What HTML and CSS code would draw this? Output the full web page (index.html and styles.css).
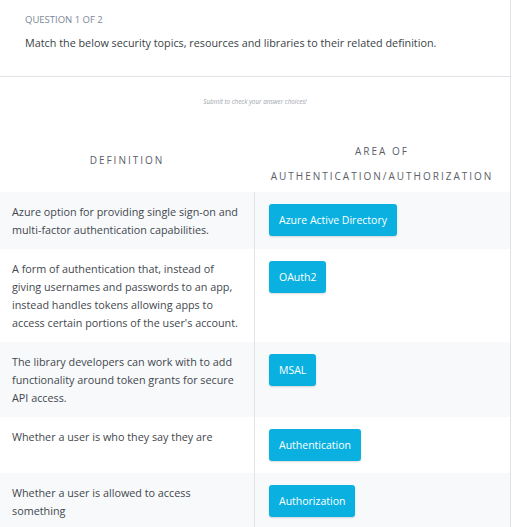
FILE: index.html
```html
<!DOCTYPE html>
<html>
<head>
<meta charset="utf-8">
<link rel="stylesheet" href="styles.css">
</head>
<body>
<div class="page">
  <div class="question">
    <div class="q-label">QUESTION 1 OF 2</div>
    <div class="q-text">Match the below security topics, resources and libraries to their related definition.</div>
  </div>
  <div class="hint">Submit to check your answer choices!</div>
  <div class="table">
    <div class="th th-def">DEFINITION</div>
    <div class="th">AREA OF<br>AUTHENTICATION/AUTHORIZATION</div>

    <div class="td def shade">Azure option for providing single sign-on and multi-factor authentication capabilities.</div>
    <div class="td ans shade"><span class="chip">Azure Active Directory</span></div>

    <div class="td def">A form of authentication that, instead of giving usernames and passwords to an app, instead handles tokens allowing apps to access certain portions of the user's account.</div>
    <div class="td ans"><span class="chip">OAuth2</span></div>

    <div class="td def shade">The library developers can work with to add functionality around token grants for secure API access.</div>
    <div class="td ans shade"><span class="chip">MSAL</span></div>

    <div class="td def">Whether a user is who they say they are</div>
    <div class="td ans"><span class="chip">Authentication</span></div>

    <div class="td def shade">Whether a user is allowed to access something</div>
    <div class="td ans shade"><span class="chip">Authorization</span></div>
  </div>
</div>
</body>
</html>
```

FILE: styles.css
```css
html, body {
  margin: 0;
  padding: 0;
  background: #ffffff;
}
body {
  font-family: "Open Sans", "Liberation Sans", sans-serif;
  color: #42474d;
}
.page {
  width: 510px;
  min-height: 527px;
  border-right: 1px solid #dfe3e7;
}
.question {
  padding: 13px 25px 0 25px;
  height: 63px;
  border-bottom: 1px solid #dfe3e7;
}
.q-label {
  font-size: 9.5px;
  line-height: 14px;
  color: #7c8896;
}
.q-text {
  margin-top: 8px;
  font-size: 10.8px;
  line-height: 16px;
  color: #3a3f45;
}
.hint {
  text-align: center;
  font-size: 6.3px;
  font-style: italic;
  color: #a0a6ad;
  padding-top: 20px;
  height: 42px;
}
.table {
  display: grid;
  grid-template-columns: 254px 256px;
}
.th {
  text-align: center;
  font-size: 10px;
  letter-spacing: 2px;
  line-height: 25px;
  color: #5a6068;
  padding: 0 0 3px 0;
  display: flex;
  align-items: center;
  justify-content: center;
}
.th-def {
  padding-bottom: 11px;
}
.td {
  padding: 11px 13px 10px 12px;
  font-size: 10.8px;
  line-height: 18px;
}
.td.ans {
  border-left: 1px solid #e1e5e9;
  padding: 12px 14px 12px 14px;
}
.shade {
  background: #f7f9fb;
}
.chip {
  display: inline-block;
  height: 32px;
  line-height: 32px;
  padding: 0 10px;
  background: #0ab1e0;
  color: #ffffff;
  font-size: 10.5px;
  border-radius: 3px;
  box-shadow: 0 1px 2px rgba(0,0,0,0.15);
}
```
